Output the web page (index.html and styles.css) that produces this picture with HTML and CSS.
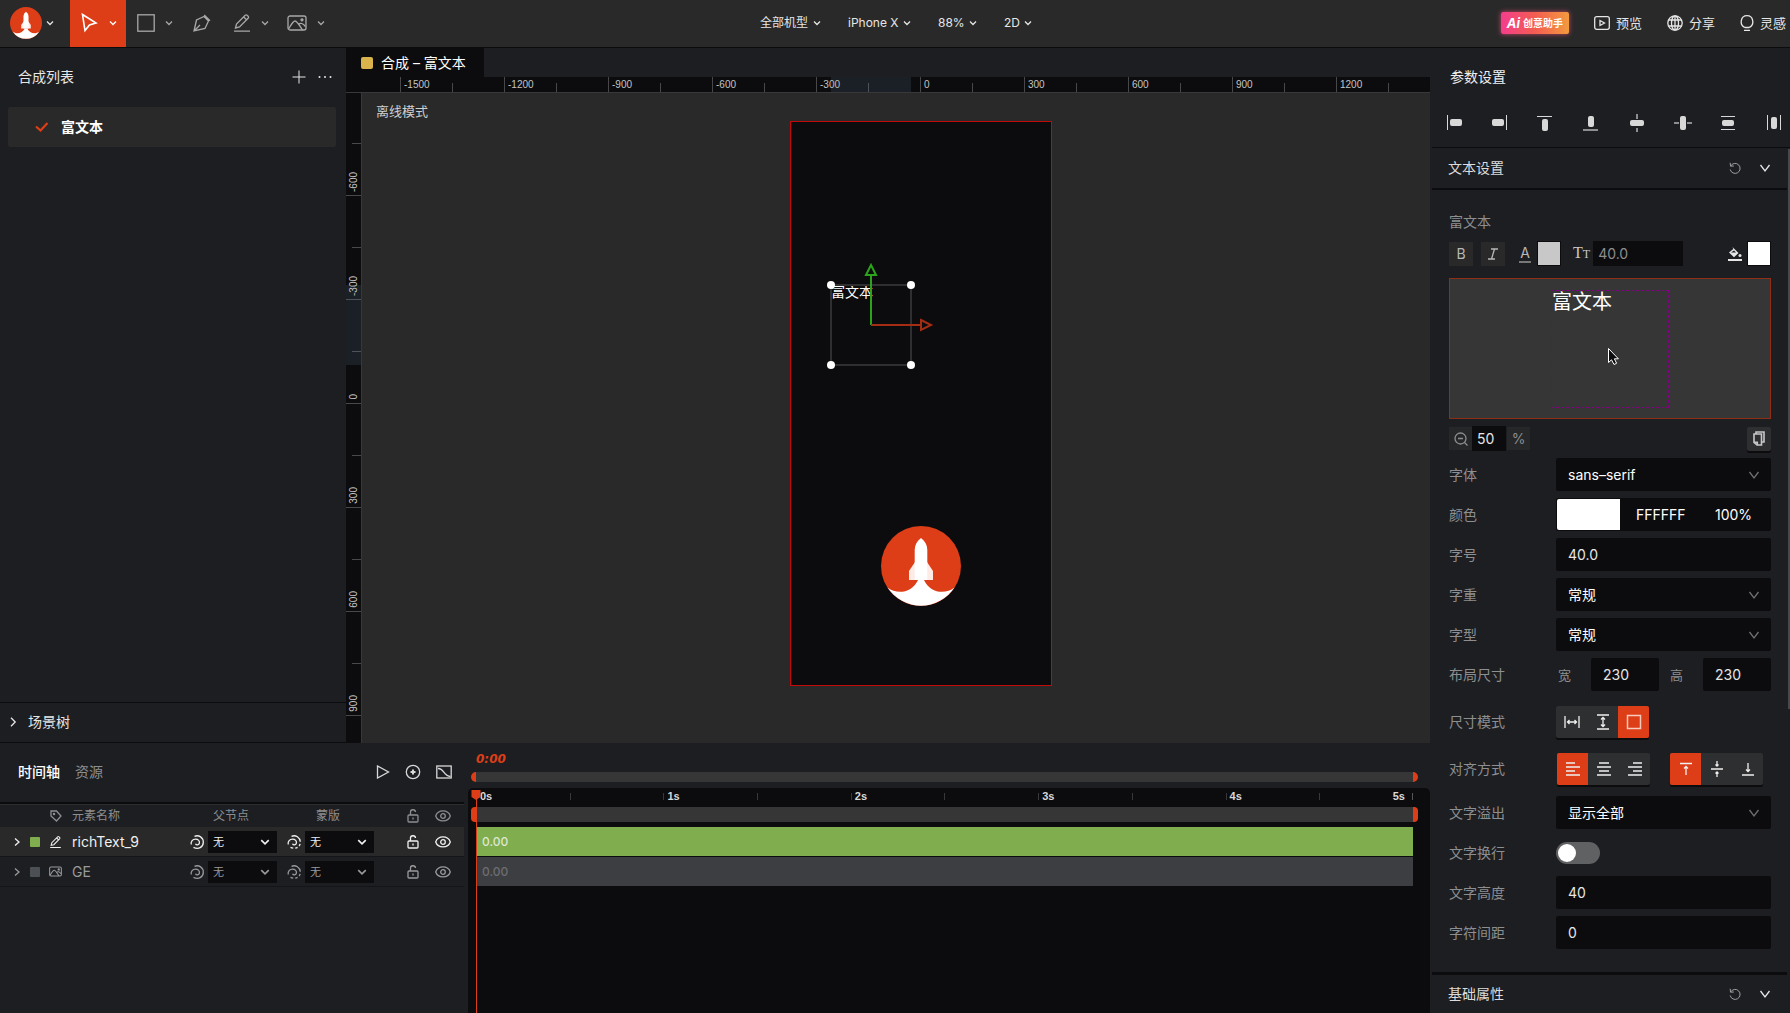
FILE: index.html
```html
<!DOCTYPE html>
<html lang="zh-CN">
<head>
<meta charset="utf-8">
<meta name="viewport" content="width=device-width, initial-scale=1">
<title>富文本</title>
<link rel="stylesheet" href="styles.css">
</head>
<body>
<svg class="sprite" aria-hidden="true">
  <symbol id="i-down" viewBox="0 0 8 8"><path d="M1 2.500 4 5.500 7 2.500"/></symbol>
  <symbol id="i-down-lg" viewBox="0 0 12 12"><path d="M1.500 3 6 9 10.500 3"/></symbol>
  <symbol id="i-right" viewBox="0 0 8 8"><path d="M2 .5 6 4 2 7.500"/></symbol>
  <symbol id="i-logo" viewBox="0 0 80 80">
    <circle cx="40" cy="40" r="40" fill="#de3e17"/>
    <path d="M6.500 61.500C16 69 31 67 37 54h6c6 13 21 15 30.500 7.500A40 40 0 0 1 6.500 61.500z" fill="#fff"/>
    <path d="M28 54v-9l6-9h12l6 9v9z" fill="#fdebe6"/>
    <path d="M40 12c4 3 6.300 7 6.300 12v30H33.700V24c0-5 2.300-9 6.300-12z" fill="#fff"/>
  </symbol>
  <symbol id="i-pencil" viewBox="0 0 18 18"><path d="M1 17.200h16M2.500 14l1-4L12.200 1.300q1-.9 2 0l.9.9q.9 1 0 2L6.500 13zM10.800 3l2.700 2.700"/></symbol>
  <symbol id="i-image" viewBox="0 0 20 16"><rect x="1" y="1" width="18" height="14" rx="2"/><path d="M1.500 14C4 10 6 6 8 6s5 5 7.500 9M11.500 9.500q3-3 7 2"/><circle cx="15" cy="4.800" r="1" fill="currentColor"/></symbol>
  <symbol id="i-reset" viewBox="0 0 12 12"><path d="M1.700 4A5 5 0 1 1 1.200 7.500M1.200.8 1.500 4.200 4.800 4"/></symbol>
  <symbol id="i-lock" viewBox="0 0 12 14"><rect x="1" y="6" width="10" height="7" rx="1"/><path d="M3.500 6V3.500a2.500 2.500 0 0 1 5-.5M6 8.500v2"/></symbol>
  <symbol id="i-eye" viewBox="0 0 16 12"><path d="M.7 6C3-.8 13-.8 15.300 6 13 12.500 3 12.500.7 6z"/><circle cx="8" cy="6" r="2.300"/></symbol>
  <symbol id="i-swirl" viewBox="0 0 14 14"><path d="M4.500 1.300C9-.6 13.300 2.800 13.300 7.200c0 5-5 7.600-9.800 5.100"/><path d="M1.200 9.500C.6 6.300 2.800 4.200 5.500 4.200c2.800 0 4.300 1.800 3.900 3.900-.4 2-3 2.400-3.900.6"/></symbol>
  <symbol id="i-swirl-dash" viewBox="0 0 14 14"><path stroke-dasharray="12 2 2.500 2 2.500 2 30" d="M4.500 1.300C9-.6 13.300 2.800 13.300 7.200c0 5-5 7.600-9.800 5.100"/><path d="M1.200 9.500C.6 6.300 2.800 4.200 5.500 4.200c2.800 0 4.300 1.800 3.900 3.900-.4 2-3 2.400-3.900.6"/></symbol>
</svg>

<div class="app">
<header class="topbar">
  <nav class="tools" aria-label="工具">
    <button class="brand" aria-label="主菜单"><svg width="32" height="32"><use href="#i-logo"/></svg><svg class="ico" width="8" height="8"><use href="#i-down"/></svg></button>
    <button class="tool tool--active" aria-label="选择"><svg class="ico ico--thick" width="18" height="20" viewBox="0 0 18 20"><path d="M1.500 1.500 15 10 8.500 12 4 17.500z"/></svg><svg class="ico" width="8" height="8"><use href="#i-down"/></svg></button>
    <button class="tool" aria-label="矩形"><svg class="ico" width="18" height="18" viewBox="0 0 18 18"><rect x=".8" y=".8" width="16.400" height="16.400"/></svg><svg class="ico" width="8" height="8"><use href="#i-down"/></svg></button>
    <button class="tool tool--single" aria-label="钢笔"><svg class="ico" width="18" height="18" viewBox="0 0 18 18"><path d="M1 17 3.500 6 11 2.500l4.500 4.500L12 14.500zM1 17l6-6M11.200 1l5.800 5.800"/></svg></button>
    <button class="tool" aria-label="画笔"><svg class="ico" width="18" height="18"><use href="#i-pencil"/></svg><svg class="ico" width="8" height="8"><use href="#i-down"/></svg></button>
    <button class="tool" aria-label="图片"><svg class="ico" width="20" height="16"><use href="#i-image"/></svg><svg class="ico" width="8" height="8"><use href="#i-down"/></svg></button>
  </nav>
  <div class="modes">
    <label class="mode"><select aria-label="机型"><option>全部机型</option></select><svg class="ico" width="8" height="8"><use href="#i-down"/></svg></label>
    <label class="mode"><select aria-label="设备"><option>iPhone X</option></select><svg class="ico" width="8" height="8"><use href="#i-down"/></svg></label>
    <label class="mode"><select aria-label="缩放"><option>88%</option></select><svg class="ico" width="8" height="8"><use href="#i-down"/></svg></label>
    <label class="mode"><select aria-label="维度"><option>2D</option></select><svg class="ico" width="8" height="8"><use href="#i-down"/></svg></label>
  </div>
  <div class="actions">
    <button class="ai"><i>Ai</i>创意助手</button>
    <button class="action"><svg class="ico" width="16" height="14" viewBox="0 0 16 14"><rect x=".7" y=".7" width="14.600" height="12.600" rx="2"/><path d="M6 4.500v5L10.500 7z"/></svg>预览</button>
    <button class="action"><svg class="ico" width="16" height="16" viewBox="0 0 16 16"><circle cx="8" cy="8" r="7.200"/><ellipse cx="8" cy="8" rx="3.500" ry="7.200"/><path d="M1.500 5h13M1.500 11h13M8 1v14"/></svg>分享</button>
    <button class="action action--idea"><svg class="ico" width="14" height="16" viewBox="0 0 14 16"><path d="M5 12.500C-1 10 .5.700 7 .7S15 10 9 12.500zM4 15.300h6"/></svg>灵感</button>
  </div>
</header>

<div class="body">
<main class="workspace">
  <div class="upper">
    <aside class="side">
      <div class="side-head"><h2>合成列表</h2>
        <button aria-label="新建"><svg class="ico ico--hair" width="14" height="14" viewBox="0 0 14 14"><path d="M7 .5v13M.5 7h13"/></svg></button>
        <button aria-label="更多"><svg width="14" height="14" viewBox="0 0 14 14" fill="currentColor"><circle cx="1.500" cy="7" r="1"/><circle cx="7" cy="7" r="1"/><circle cx="12.500" cy="7" r="1"/></svg></button>
      </div>
      <button class="comp"><svg width="14" height="10" viewBox="0 0 14 10"><path d="M1 4.500 5.500 8.500 12.500 1" fill="none" stroke="#de3e17" stroke-width="2.200"/></svg>富文本</button>
      <button class="scene"><svg class="ico" width="8" height="10" viewBox="0 0 8 10"><path d="M2 .8 6.200 5 2 9.200"/></svg>场景树</button>
    </aside>
    <section class="stage">
      <div class="tabs"><button class="tab"><span class="swatch"></span>合成 – 富文本</button></div>
      <div class="hruler">
        <div class="htick htick--major">-1500</div><div class="htick"></div>
        <div class="htick htick--major">-1200</div><div class="htick"></div>
        <div class="htick htick--major">-900</div><div class="htick"></div>
        <div class="htick htick--major">-600</div><div class="htick"></div>
        <div class="htick htick--major">-300</div><div class="htick"></div>
        <div class="htick htick--major">0</div><div class="htick"></div>
        <div class="htick htick--major">300</div><div class="htick"></div>
        <div class="htick htick--major">600</div><div class="htick"></div>
        <div class="htick htick--major">900</div><div class="htick"></div>
        <div class="htick htick--major">1200</div><div class="htick"></div>
        <div class="range range--x"></div>
      </div>
      <div class="view">
        <div class="vruler">
          <div class="vtick"></div><div class="vtick vtick--major"><span>-600</span></div>
          <div class="vtick"></div><div class="vtick vtick--major"><span>-300</span></div>
          <div class="vtick"></div><div class="vtick vtick--major"><span>0</span></div>
          <div class="vtick"></div><div class="vtick vtick--major"><span>300</span></div>
          <div class="vtick"></div><div class="vtick vtick--major"><span>600</span></div>
          <div class="vtick"></div><div class="vtick vtick--major"><span>900</span></div>
          <div class="range range--y"></div>
        </div>
        <div class="canvas">
          <p class="offline">离线模式</p>
          <div class="artboard">
            <span class="rich">富文本</span>
            <svg class="gizmo" width="120" height="120" viewBox="0 0 120 120" fill="none">
              <rect x="11" y="31" width="80" height="80" stroke="#2f2f31" stroke-width="2"/>
              <path d="M51 71V22" stroke="#2ba31a" stroke-width="2"/><path d="M46 21 51 11l5 10z" stroke="#2ba31a" stroke-width="2"/>
              <path d="M51 71h50" stroke="#a52d13" stroke-width="2"/><path d="M101 66l10 5-10 5z" stroke="#a52d13" stroke-width="2"/>
              <g fill="#fff"><circle cx="11" cy="31" r="4"/><circle cx="91" cy="31" r="4"/><circle cx="11" cy="111" r="4"/><circle cx="91" cy="111" r="4"/></g>
            </svg>
            <svg class="rocket" width="80" height="80"><use href="#i-logo"/></svg>
          </div>
        </div>
      </div>
    </section>
  </div>

  <section class="timeline">
    <div class="layers">
      <div class="layers-head">
        <button class="on">时间轴</button><button>资源</button><span class="grow"></span>
        <button aria-label="播放"><svg class="ico" width="14" height="14" viewBox="0 0 14 14"><path d="M1.500 1v12L12.500 7z"/></svg></button>
        <button aria-label="关键帧"><svg class="ico" width="16" height="16" viewBox="0 0 16 16"><circle cx="8" cy="8" r="6.700"/><path stroke-width="2" d="M8 5.500v5M5.500 8h5"/></svg></button>
        <button aria-label="曲线"><svg class="ico" width="16" height="14" viewBox="0 0 16 14"><rect x=".8" y="1" width="14.400" height="12"/><path d="M2 3.500C8 3 7.500 11 14.500 11.500"/></svg></button>
      </div>
      <table class="layer-table">
        <colgroup><col class="c-lead"><col class="c-name"><col class="c-parent"><col class="c-mask"><col class="c-flag"><col class="c-flag"><col></colgroup>
        <thead><tr>
          <th><div class="lead"><svg class="ico" width="12" height="12" viewBox="0 0 12 12"><path d="M1 1h5.500L11 6 6.500 11 1 6z"/><circle cx="4" cy="4" r=".6"/></svg></div></th>
          <th>元素名称</th><th class="h-parent">父节点</th><th class="h-mask">蒙版</th>
          <th><svg class="ico" width="12" height="14"><use href="#i-lock"/></svg></th><th><svg class="ico" width="16" height="12"><use href="#i-eye"/></svg></th><th></th>
        </tr></thead>
        <tbody>
          <tr class="picked">
            <td><div class="lead"><svg class="ico" width="8" height="8"><use href="#i-right"/></svg><span class="dot dot--green"></span><svg class="ico ico--thick" width="13" height="12"><use href="#i-pencil"/></svg></div></td>
            <td class="name">richText_9</td>
            <td><div class="link"><svg class="ico" width="14" height="14"><use href="#i-swirl"/></svg><label class="mini"><select aria-label="richText_9 父节点"><option>无</option></select><svg class="ico" width="10" height="10"><use href="#i-down"/></svg></label></div></td>
            <td><div class="link"><svg class="ico" width="14" height="14"><use href="#i-swirl-dash"/></svg><label class="mini"><select aria-label="richText_9 蒙版"><option>无</option></select><svg class="ico" width="10" height="10"><use href="#i-down"/></svg></label></div></td>
            <td><svg class="ico" width="12" height="14"><use href="#i-lock"/></svg></td><td><svg class="ico" width="16" height="12"><use href="#i-eye"/></svg></td><td></td>
          </tr>
          <tr>
            <td><div class="lead"><svg class="ico" width="8" height="8"><use href="#i-right"/></svg><span class="dot"></span><svg class="ico ico--thick" width="13" height="11"><use href="#i-image"/></svg></div></td>
            <td class="name">GE</td>
            <td><div class="link"><svg class="ico" width="14" height="14"><use href="#i-swirl"/></svg><label class="mini"><select aria-label="GE 父节点"><option>无</option></select><svg class="ico" width="10" height="10"><use href="#i-down"/></svg></label></div></td>
            <td><div class="link"><svg class="ico" width="14" height="14"><use href="#i-swirl-dash"/></svg><label class="mini"><select aria-label="GE 蒙版"><option>无</option></select><svg class="ico" width="10" height="10"><use href="#i-down"/></svg></label></div></td>
            <td><svg class="ico" width="12" height="14"><use href="#i-lock"/></svg></td><td><svg class="ico" width="16" height="12"><use href="#i-eye"/></svg></td><td></td>
          </tr>
        </tbody>
      </table>
    </div>
    <div class="tracks">
      <div class="time">0:00</div>
      <div class="span span--thin"></div>
      <div class="track-area">
        <div class="seconds">
          <span>0s</span><span></span><span>1s</span><span></span><span>2s</span><span></span><span>3s</span><span></span><span>4s</span><span class="last">5s</span>
        </div>
        <div class="span"></div>
        <div class="clip clip--green">0.00</div>
        <div class="clip">0.00</div>
        <svg class="playhead" width="10" height="225" viewBox="0 0 10 225"><path d="M.5 2h9v7L5 12 .5 9z" fill="#de3e17"/><path d="M5.500 10v215" stroke="#de3e17"/></svg>
      </div>
    </div>
  </section>
</main>

<aside class="props">
  <h2 class="props-title">参数设置</h2>
  <div class="aligns">
    <button aria-label="左对齐"><svg width="18" height="18" viewBox="0 0 18 18"><path d="M2 1h1v15H2z"/><rect x="5" y="5" width="12" height="7" rx="2"/></svg></button>
    <button aria-label="右对齐"><svg width="18" height="18" viewBox="0 0 18 18"><path d="M15 1h1v15h-1z"/><rect x="1" y="5" width="12" height="7" rx="2"/></svg></button>
    <button aria-label="顶对齐"><svg width="18" height="18" viewBox="0 0 18 18"><path d="M1 2h15v1H1z"/><rect x="6" y="5" width="6" height="12" rx="2"/></svg></button>
    <button aria-label="底对齐"><svg width="18" height="18" viewBox="0 0 18 18"><path opacity=".6" d="M1 15h15v2H1z"/><rect x="6" y="2" width="6" height="11" rx="2"/></svg></button>
    <button aria-label="垂直居中"><svg width="18" height="18" viewBox="0 0 18 18"><path opacity=".6" d="M8 0h2v18H8z"/><path fill="#1d1e22" d="M6 5h6v9H6z"/><rect x="2" y="6" width="14" height="6" rx="2"/></svg></button>
    <button aria-label="水平居中"><svg width="18" height="18" viewBox="0 0 18 18"><path opacity=".6" d="M0 8h18v2H0z"/><path fill="#1d1e22" d="M5 6h8v6H5z"/><rect x="6" y="2" width="6" height="14" rx="2"/></svg></button>
    <button aria-label="垂直分布"><svg width="18" height="18" viewBox="0 0 18 18"><path d="M2 2h14v1H2zM2 15h14v1H2z"/><rect x="3" y="6" width="12" height="6" rx="2"/></svg></button>
    <button aria-label="水平分布"><svg width="18" height="18" viewBox="0 0 18 18"><path d="M2 1h1v15H2zM15 1h1v15h-1z"/><rect x="6" y="3" width="6" height="12" rx="2"/></svg></button>
  </div>
  <div class="sec-head"><h3>文本设置</h3><button aria-label="重置"><svg class="ico ico--hair" width="12" height="12"><use href="#i-reset"/></svg></button><button aria-label="折叠"><svg class="ico ico--lit" width="12" height="12"><use href="#i-down-lg"/></svg></button></div>
  <div class="form">
    <p class="sub">富文本</p>
    <div class="rt-bar">
      <button class="sq">B</button>
      <button class="sq"><svg class="ico" width="12" height="12" viewBox="0 0 12 12"><path d="M4 1h7M1 11h7M7.500 1l-3 10"/></svg></button>
      <span class="ulA">A</span>
      <button class="well" aria-label="文字颜色"></button>
      <label class="tt" for="rt-size">T<small>T</small></label>
      <input class="rt-size" id="rt-size" value="40.0">
      <span class="grow"></span>
      <svg class="bucket" width="14" height="14" viewBox="0 0 14 14"><path d="M0 12h14v2H0z"/><path d="M4.500 0 10.500 6 6 10.200 1 5.500 5.300 2z"/><path d="M3 5.500h5L6 3.500z" fill="#1d1e22"/><circle cx="12" cy="8.500" r="1.500"/></svg>
      <button class="well well--white" aria-label="背景颜色"></button>
    </div>
    <div class="preview"><div class="pbox">富文本</div>
      <svg class="cursor" width="14" height="20" viewBox="0 0 14 20"><path d="M1.500 1.500v14l3-2.700L7 17.500l2.600-1.200-2.200-4.500h4z" fill="#0c0c0e" stroke="#fff"/></svg>
    </div>
    <div class="zoombar">
      <button class="zb" aria-label="缩小"><svg class="ico" width="14" height="14" viewBox="0 0 14 14"><circle cx="6.500" cy="6.500" r="5.500"/><path d="M4 6.500h5M10.500 10.500l3 3"/></svg></button><input class="zin" aria-label="预览缩放" value="50"><span class="zb">%</span>
      <span class="grow"></span>
      <button class="copy" aria-label="复制"><svg class="ico ico--thick" width="12" height="15" viewBox="0 0 12 15"><path d="M1 3h7.500v11H4L1 11.500zM3 3V1h8v10H8.500M4.300 14v-2.700H1"/></svg></button>
    </div>
    <div class="row"><label for="font">字体</label><div class="field"><select id="font"><option>sans–serif</option></select><svg class="ico" width="12" height="12"><use href="#i-down-lg"/></svg></div></div>
    <div class="row"><label for="hex">颜色</label><div class="field field--color"><button class="chip" aria-label="选择颜色"></button><input id="hex" value="FFFFFF"><input aria-label="不透明度" value="100%"></div></div>
    <div class="row"><label for="size">字号</label><input class="field" id="size" value="40.0"></div>
    <div class="row"><label for="weight">字重</label><div class="field"><select id="weight"><option>常规</option></select><svg class="ico" width="12" height="12"><use href="#i-down-lg"/></svg></div></div>
    <div class="row"><label for="style">字型</label><div class="field"><select id="style"><option>常规</option></select><svg class="ico" width="12" height="12"><use href="#i-down-lg"/></svg></div></div>
    <div class="row"><span>布局尺寸</span><div class="pair"><label for="w">宽</label><input class="field" id="w" value="230"><label for="h">高</label><input class="field" id="h" value="230"></div></div>
    <div class="row row--size"><span>尺寸模式</span><div class="seg">
      <button aria-label="自适应宽"><svg class="ico ico--white" width="16" height="14" viewBox="0 0 16 14"><path d="M1 1v12M15 1v12M3.500 7h9M5.500 5 3.500 7l2 2M10.500 5l2 2-2 2"/></svg></button>
      <button aria-label="自适应高"><svg class="ico ico--white" width="14" height="16" viewBox="0 0 14 16"><path d="M1 1h12M1 15h12M7 3.500v9M5 5.500l2-2 2 2M5 10.500l2 2 2-2"/></svg></button>
      <button class="on" aria-label="固定"><svg class="ico ico--white" width="16" height="16" viewBox="0 0 16 16"><rect x="1.500" y="1.500" width="13" height="13" stroke="#f8c9bd" stroke-width="1.500"/></svg></button>
    </div></div>
    <div class="row row--align"><span>对齐方式</span><div class="segs"><div class="seg">
      <button class="on" aria-label="居左"><svg class="ico ico--white" width="16" height="14" viewBox="0 0 16 14"><path d="M1 1h9M1 5h14M1 9h9M1 13h14"/></svg></button>
      <button aria-label="居中"><svg class="ico ico--white" width="16" height="14" viewBox="0 0 16 14"><path d="M3 1h10M1 5h14M3 9h10M1 13h14"/></svg></button>
      <button aria-label="居右"><svg class="ico ico--white" width="16" height="14" viewBox="0 0 16 14"><path d="M6 1h9M1 5h14M6 9h9M1 13h14"/></svg></button>
    </div><div class="seg">
      <button class="on" aria-label="靠上"><svg class="ico ico--white" width="14" height="14" viewBox="0 0 14 14"><path d="M1 1.500h12M7 13V4.500M5 6.500l2-2 2 2"/></svg></button>
      <button aria-label="垂直居中"><svg class="ico ico--white" width="14" height="16" viewBox="0 0 14 16"><path d="M1 8h12M7 0v5M5.500 3.500 7 5l1.500-1.500M7 16v-5M5.500 12.500 7 11l1.500 1.500"/></svg></button>
      <button aria-label="靠下"><svg class="ico ico--white" width="14" height="14" viewBox="0 0 14 14"><path d="M1 13h12M7 1v8.500M5 7.500l2 2 2-2"/></svg></button>
    </div></div></div>
    <div class="row"><label for="overflow">文字溢出</label><div class="field"><select id="overflow"><option>显示全部</option></select><svg class="ico" width="12" height="12"><use href="#i-down-lg"/></svg></div></div>
    <div class="row"><label for="wrap">文字换行</label><input type="checkbox" class="switch" id="wrap"></div>
    <div class="row"><label for="lh">文字高度</label><input class="field" id="lh" value="40"></div>
    <div class="row"><label for="ls">字符间距</label><input class="field" id="ls" value="0"></div>
  </div>
  <div class="sec-head sec-head--next"><h3>基础属性</h3><button aria-label="重置"><svg class="ico ico--hair" width="12" height="12"><use href="#i-reset"/></svg></button><button aria-label="展开"><svg class="ico ico--lit" width="12" height="12"><use href="#i-down-lg"/></svg></button></div>
  <div class="scroll"></div>
</aside>
</div>
</div>
</body>
</html>
```
FILE: styles.css
```css
* { box-sizing: border-box; }
:root {
  --panel: #1d1e22;
  --bar: #292929;
  --dark: #0c0c0e;
  --red: #de3e17;
  --green: #80ad4d;
  --mute: #8d8e90;
}
body {
  margin: 0;
  background: var(--panel);
  color: #e6e6e6;
  font: 14px/20px Inter, "Noto Sans CJK SC", sans-serif;
}
button, select, input {
  margin: 0; padding: 0; border: 0; border-radius: 0; outline: 0;
  background: none; color: inherit; font: inherit; appearance: none;
}
h2, h3, p { margin: 0; font: inherit; }
svg { display: block; flex: none; }
.sprite { position: absolute; width: 0; height: 0; }
.ico { fill: none; stroke: currentColor; stroke-width: 1.300; }
.ico--hair { stroke-width: 1; }
.ico--thick { stroke-width: 1.600; }
.ico--white { color: #f0f0f0; }
.ico--lit { color: #e6e6e6; }
.grow { flex: 1; }

.app { display: flex; flex-direction: column; height: 100vh; overflow: hidden; }
.body { display: flex; flex: 1; min-height: 0; }
.workspace { display: flex; flex-direction: column; flex: 1; min-width: 0; }

/* top bar */
.topbar {
  display: grid; grid-template-columns: 1fr auto 1fr; flex: none; height: 48px;
  background: var(--bar); border-bottom: 1px solid #0c0c0e;
}
.tools { display: flex; color: #a8a8a8; }
.brand { display: flex; align-items: center; gap: 4px; width: 70px; padding: 0 0 2px 10px; color: #e6e6e6; }
.tool { display: flex; align-items: center; justify-content: space-between; width: 56px; padding: 0 9px 2px 11px; }
.tool:last-child { padding-left: 9px; }
.tool--single { justify-content: center; padding: 0 6px 2px; width: 40px; }
.tool--active { background: var(--red); color: #fff; }
.modes { display: flex; align-items: center; gap: 27px; padding: 0 0 2px 2px; font-size: 12px; }
.mode { display: flex; align-items: center; gap: 4px; }
.actions { display: flex; align-items: center; justify-content: flex-end; gap: 25px; padding: 0 4px 2px 0; font-size: 13px; }
.action { display: flex; align-items: center; gap: 6px; white-space: nowrap; }
.ai {
  display: flex; align-items: center; justify-content: center; gap: 3px; width: 68px; height: 22px;
  border-radius: 2px; background: linear-gradient(90deg, #f43d8c, #f45d51 50%, #f29a3e);
  box-shadow: 0 0 5px #c9486a; color: #fff; font-size: 10px; font-weight: 700; white-space: nowrap;
}
.ai i { font-size: 13px; }

/* composition list */
.upper { display: flex; flex: 1; min-height: 0; }
.side { display: flex; flex-direction: column; width: 346px; flex: none; }
.side-head { display: flex; align-items: center; gap: 12px; padding: 19px 14px 19px 18px; }
.side-head h2 { flex: 1; }
.comp {
  display: flex; align-items: center; gap: 12px; height: 40px; margin: 1px 10px 0 8px; padding-left: 27px;
  background: var(--bar); border-radius: 2px; color: #fff; font-weight: 700;
}
.scene {
  display: flex; align-items: center; gap: 11px; height: 41px; margin-top: auto; padding: 0 0 1px 9px;
  border-top: 1px solid #0c0c0e; border-bottom: 1px solid #0c0c0e;
}

/* stage */
.stage { display: flex; flex-direction: column; flex: 1; min-width: 0; }
.tabs { display: flex; height: 29px; }
.tab { display: flex; align-items: center; gap: 8px; width: 138px; padding-left: 15px; background: var(--dark); color: #fff; white-space: nowrap; }
.swatch { width: 12px; height: 12px; border-radius: 2px; background: #d9b44c; }
.hruler {
  position: relative; display: flex; align-items: flex-end; height: 16px; padding-left: 54px; overflow: hidden;
  background: var(--dark); border-bottom: 1px solid #38383a; color: #c4c4c4; font: 10px/15px "Liberation Sans", sans-serif;
}
.htick { flex: 0 0 52px; height: 9px; border-left: 1px solid #48484a; }
.htick--major { height: 15px; padding-left: 3px; }
.view { display: flex; flex: 1; min-height: 0; }
.vruler {
  position: relative; flex: none; width: 16px; overflow: hidden; background: var(--dark);
  border-right: 1px solid #38383a; color: #c4c4c4; font: 10px/14px "Liberation Sans", sans-serif;
}
.vtick { display: flex; align-items: flex-end; justify-content: flex-end; height: 52px; width: 9px; margin-left: auto; border-bottom: 1px solid #48484a; }
.vtick:first-child { height: 51px; }
.vtick--major { width: auto; }
.vtick span { writing-mode: vertical-rl; transform: rotate(180deg); padding-top: 3px; }
.range { position: absolute; background: #7799bb; opacity: .14; }
.range--x { left: 485px; top: 0; width: 80px; height: 15px; }
.range--y { left: 0; top: 192px; width: 15px; height: 80px; }
.canvas { position: relative; flex: 1; overflow: hidden; background: var(--bar); }
.offline { padding: 8px 14px; font-size: 13px; line-height: 20px; color: #d0d0d0; }
.artboard { position: absolute; left: 428px; top: 28px; width: 262px; height: 565px; background: var(--dark); border: 1px solid #c40a08; }
.rich { position: absolute; left: 40px; top: 159px; font: 14px/20px "Noto Sans CJK SC", sans-serif; color: #fff; }
.gizmo { position: absolute; left: 29px; top: 132px; }
.rocket { position: absolute; left: 90px; top: 404px; }

/* timeline */
.timeline { display: flex; flex: none; height: 270px; }
.layers { width: 468px; flex: none; }
.layers-head { display: flex; align-items: center; gap: 15px; height: 61px; margin-right: 4px; padding: 0 12px 1px 18px; border-bottom: 2px solid #0c0c0e; color: #d8d8d8; }
.layers-head .on { color: #fff; font-weight: 500; }
.layers-head button:nth-child(2) { color: var(--mute); }
.layer-table { width: 464px; table-layout: fixed; border-collapse: separate; border-spacing: 0; color: #9a9a9c; }
.c-lead { width: 72px; } .c-name { width: 118px; } .c-parent { width: 97px; } .c-mask { width: 111px; } .c-flag { width: 30px; }
th, td { padding: 0; text-align: left; }
th { height: 23px; font-size: 12px; font-weight: 400; line-height: 20px; color: var(--mute); border-top: 1px solid #2b2c2e; }
.h-parent { padding-left: 23px; }
.h-mask { padding-left: 29px; }
th > .ico, td > .ico { margin: 0 auto; }
td { height: 30px; border-bottom: 1px solid #141518; }
.picked { background: var(--bar); color: #f0f0f0; }
.lead { display: flex; align-items: center; justify-content: flex-end; gap: 9px; padding-right: 10px; }
.dot { width: 10px; height: 10px; border-radius: 1px; background: #4c4f54; }
.dot--green { background: var(--green); }
.link { display: flex; align-items: center; gap: 4px; }
.mini { display: flex; align-items: center; width: 69px; height: 22px; padding: 0 7px 0 5px; background: var(--dark); font-size: 11px; }
.mini select { flex: 1; }
.tracks { display: flex; flex-direction: column; flex: 1; min-width: 0; }
.time { height: 29px; padding: 6px 8px 0; color: var(--red); font: italic 700 12px/20px "DejaVu Sans", Inter, sans-serif; }
.span { height: 15px; margin: 0 12px 0 3px; border: solid var(--red); border-width: 0 5px; border-radius: 4px; background: #363636; }
.span--thin { height: 10px; border-radius: 5px; }
.track-area { position: relative; flex: 1; margin-top: 6px; overflow: hidden; background: var(--dark); border-radius: 5px 5px 0 0; }
.seconds { display: grid; grid-template-columns: repeat(10, 1fr); height: 19px; padding-top: 5px; margin: 0 17px 0 8px; color: #d8d8d8; font: 700 11px/7px "Liberation Sans", sans-serif; }
.seconds span { height: 7px; padding-left: 3px; border-left: 1px solid #38383a; }
.seconds .last { padding-right: 7px; border-right: 1px solid #555; text-align: right; }
.clip { height: 29px; margin: 0 17px 1px 8px; padding-left: 6px; background: #3d3e41; color: #6c6d70; font-size: 12px; line-height: 29px; font-weight: 500; }
.clip--green { margin-top: 5px; background: var(--green); color: #dde6d2; }
.playhead { position: absolute; left: 3px; top: 0; }

/* properties */
.props { position: relative; flex: none; width: 360px; padding-left: 2px; overflow: hidden; }
.props-title { padding: 19px 18px; color: #f0f0f0; }
.aligns { display: flex; justify-content: space-between; padding: 8px 7px 15px 13px; border-bottom: 1px solid #0c0c0e; fill: #d8d8d8; color: #d8d8d8; }
.aligns svg { width: 18px; height: 18px; }
.sec-head { display: flex; align-items: center; gap: 18px; height: 42px; margin-right: 3px; padding: 0 16px 0 16px; border-bottom: 2px solid #0c0c0e; color: #dcdcdc; }
.sec-head h3 { flex: 1; }
.sec-head button { color: #a0a0a0; }
.sec-head--next { margin-top: 23px; border-top: 3px solid #0c0c0e; border-bottom: 0; height: 41px; }
.form { display: flex; flex-direction: column; gap: 7px; padding: 22px 19px 0 17px; color: var(--mute); }
.sub { height: 22px; }
.rt-bar { display: flex; align-items: center; height: 25px; }
.sq { display: flex; align-items: center; justify-content: center; width: 24px; height: 24px; margin-right: 8px; background: #292929; color: #b8b8b8; }
.ulA { width: 12px; margin: 0 6px 0 6px; border-bottom: 2px solid #777; text-align: center; color: #b8b8b8; line-height: 16px; }
.well { width: 24px; height: 25px; border: 1px solid #0c0c0e; background: #c8c8c8; }
.well--white { background: #fff; }
.tt { margin: 0 3px 0 12px; font: 16px/20px "Liberation Serif", serif; color: #c8c8c8; }
.tt small { font-size: 12px; }
.rt-size { width: 90px; height: 25px; padding-left: 5px; background: var(--dark); }
.bucket { margin-right: 5px; fill: #e6e6e6; }
.preview { position: relative; display: flex; justify-content: center; height: 141px; margin-top: 5px; padding-top: 11px; background: #363636; border: 1px solid #8d2e16; }
.pbox { width: 118px; height: 118px; border: 1px dashed #800080; color: #fff; font: 20px/20px "Noto Sans CJK SC", sans-serif; }
.cursor { position: absolute; left: 157px; top: 68px; }
.zoombar { display: flex; align-items: center; height: 25px; }
.zb { display: flex; align-items: center; justify-content: center; width: 23px; height: 23px; background: #262728; }
.zin { width: 34px; height: 25px; margin-right: 1px; padding-left: 5px; background: var(--dark); color: #e6e6e6; }
.copy { display: flex; align-items: center; justify-content: center; width: 24px; height: 24px; border-radius: 2px; background: #2e2f31; box-shadow: 0 2px 0 #0c0c0e; color: #c8c8c8; }
.row { display: grid; grid-template-columns: 107px 1fr; align-items: center; height: 33px; }
.row--size { height: 47px; }
.row--align { margin-bottom: 4px; }
.field { display: flex; align-items: center; width: 100%; min-width: 0; height: 33px; padding: 0 11px 0 12px; border-radius: 2px; background: var(--dark); color: #e6e6e6; }
.field select { flex: 1; min-width: 0; color: #fff; }
.field .ico { color: #707070; }
.field--color { gap: 16px; padding: 1px; }
.field--color input { flex: 0 0 63px; width: 63px; color: #fff; }
.field--color input:last-child { flex: 1 1 0; min-width: 0; }
.field--color .chip { flex: none; width: 63px; height: 31px; border-radius: 2px 0 0 2px; background: #fff; }
.pair { display: grid; grid-template-columns: 35px 1fr 44px 1fr; align-items: center; }
.pair label { padding-left: 2px; font-size: 13px; }
.pair .field + label { padding-left: 11px; }
.seg { display: inline-flex; width: max-content; border-radius: 2px; overflow: hidden; background: #2e2f31; box-shadow: 0 2px 0 #0c0c0e; }
.seg button { display: flex; align-items: center; justify-content: center; width: 31px; height: 32px; }
.seg .on { background: var(--red); }
.segs { display: flex; gap: 20px; padding-left: 1px; }
.switch { width: 44px; height: 22px; border-radius: 11px; background: #606163; }
.switch::before { content: ""; display: block; width: 18px; height: 18px; margin: 2px; border-radius: 50%; background: #fff; }
.scroll { position: absolute; right: 0; top: 101px; width: 2px; height: 560px; background: #48494c; }
```
